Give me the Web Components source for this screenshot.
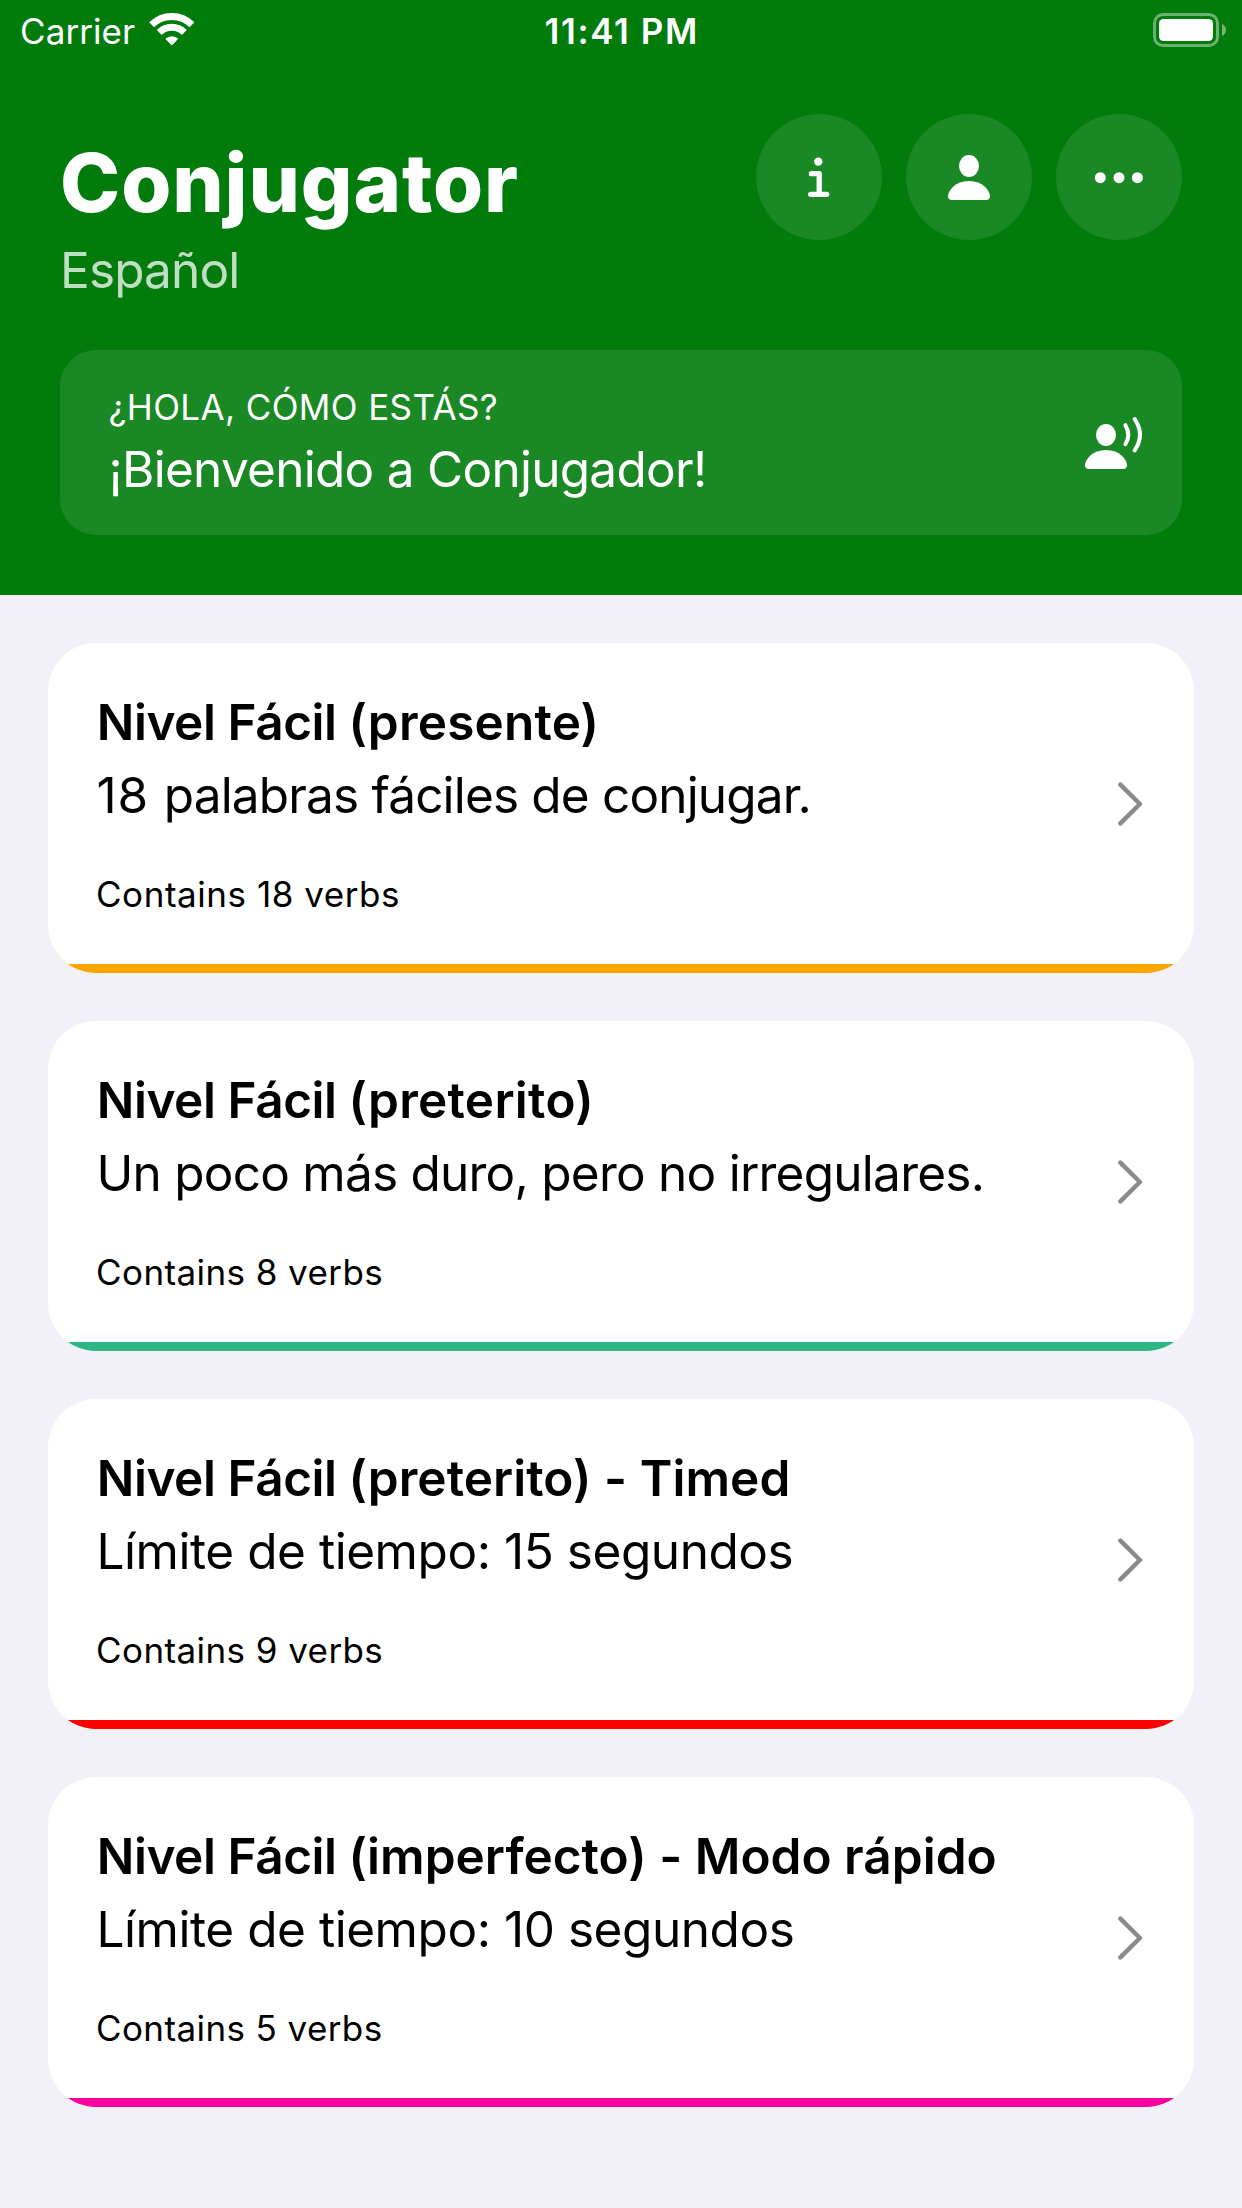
<!DOCTYPE html>
<html lang="es">
<head>
<meta charset="utf-8">
<title>Conjugator</title>
<style>
  html, body { margin: 0; height: 100%; background: #f2f1f7; }
  body { font-family: Inter, "Liberation Sans", sans-serif; }
</style>
</head>
<body>
<conjugator-app></conjugator-app>

<template id="t-status">
  <style>
    :host { display: grid; grid-template-columns: 1fr auto 1fr; height: 60px; box-sizing: border-box;
      padding: 10px 16px 0 20px; color: #fff; font-size: 35px; line-height: 42px; }
    .left { display: flex; gap: 13.5px; }
    .wifi { margin-top: 3px; }
    .clock { font-weight: 600; letter-spacing: 1.62px; padding-right: 2.5px; }
    .battery { justify-self: end; margin-top: 3px; }
    svg { display: block; }
  </style>
  <div class="left"><span style="letter-spacing:.08px">Carrier</span>
    <svg class="wifi" width="46" height="33" viewBox="0 0 46 33" fill="none" stroke="#fff">
      <path stroke-width="7" d="M2.65 11.85A28.5 28.5 0 0 1 42.95 11.85"/>
      <path stroke-width="7" d="M10.28 19.48A17.7 17.7 0 0 1 35.32 19.48"/>
      <path fill="#fff" stroke="none" d="M22.8 32.6L16.3 25.7A9.5 9.5 0 0 1 29.3 25.7Z"/>
    </svg>
  </div>
  <span class="clock">11:41 PM</span>
  <svg class="battery" width="73" height="34" viewBox="0 0 73 34">
    <rect x="1.5" y="1.5" width="63" height="31" rx="8.5" fill="none" stroke="#fff" stroke-opacity=".42" stroke-width="3"/>
    <rect x="6" y="6" width="54" height="22" rx="4.5" fill="#fff"/>
    <path d="M69 11C71.600 12 73 14.400 73 17S71.600 22 69 23Z" fill="#fff" fill-opacity=".45"/>
  </svg>
</template>

<template id="t-button">
  <style>
    :host { display: block; width: 126px; height: 126px; border-radius: 50%; background: rgba(255,255,255,.1); }
    svg { display: block; }
  </style>
  <svg width="126" height="126" viewBox="0 0 126 126" fill="#fff"></svg>
</template>

<template id="t-greeting">
  <style>
    :host { display: flex; justify-content: space-between; align-items: center; height: 185px; box-sizing: border-box;
      padding: 0 39px 0 48.500px; border-radius: 36px; background: rgba(255,255,255,.1); color: #fff; }
    .text { display: flex; flex-direction: column; gap: 11px; }
    .over { font-size: 35px; line-height: 42px; letter-spacing: .38px; }
    .main { font-size: 49.5px; line-height: 60px; letter-spacing: -.72px; }
    svg { display: block; margin-top: 1px; }
  </style>
  <div class="text">
    <div class="over"><slot name="over"></slot></div>
    <div class="main"><slot></slot></div>
  </div>
  <svg width="58" height="52" viewBox="0 0 58 52" fill="#fff">
    <ellipse cx="21" cy="18" rx="10" ry="11"/>
    <path d="M4 52C1.300 52 0 50.600 0 48.300C0 42.500 7.500 33 21 33S42 42.500 42 48.300C42 50.600 40.700 52 38 52Z"/>
    <g fill="none" stroke="#fff" stroke-width="4" stroke-linecap="round">
      <path d="M40.400 8.200Q46.200 17.700 40.400 27.200"/>
      <path d="M49.700 2.100Q60.300 17.900 49.700 33.300"/>
    </g>
  </svg>
</template>

<template id="t-header">
  <style>
    :host { display: flex; flex-direction: column; height: 595px; box-sizing: border-box; background: #007b0c; color: #fff; }
    .top { display: flex; justify-content: space-between; align-items: flex-start; padding: 54px 60px 0; height: 290px; box-sizing: border-box; }
    .titles { display: flex; flex-direction: column; gap: 8px; padding-top: 20px; }
    h1 { margin: 0; font-size: 81px; line-height: 98px; font-weight: 800; letter-spacing: .9px; }
    .sub { font-size: 49.5px; line-height: 60px; letter-spacing: -.85px; color: rgba(255,255,255,.75); }
    .actions { display: flex; gap: 24px; }
    greeting-panel { margin: 0 60px; }
  </style>
  <status-bar></status-bar>
  <div class="top">
    <div class="titles"><h1>Conjugator</h1><div class="sub">Español</div></div>
    <div class="actions">
      <round-button icon="info"></round-button>
      <round-button icon="person"></round-button>
      <round-button icon="more"></round-button>
    </div>
  </div>
  <greeting-panel><span slot="over">¿HOLA, CÓMO ESTÁS?</span>¡Bienvenido a Conjugador!</greeting-panel>
</template>

<template id="t-card">
  <style>
    :host { display: flex; justify-content: space-between; align-items: center; height: 330px; box-sizing: border-box;
      padding: 0 51px 0 48px; border-radius: 48px; color: #000;
      background: linear-gradient(var(--accent), var(--accent)) bottom / 100% 9px no-repeat, #fff; }
    .text { display: flex; flex-direction: column; padding-bottom: 9px; }
    .title { font-size: 49.5px; line-height: 60px; font-weight: 600; letter-spacing: var(--ls-title); padding-left: .8px; }
    .desc { font-size: 49.5px; line-height: 60px; margin-top: 13px; letter-spacing: var(--ls-desc); padding-left: .4px; }
    .count { font-size: 35px; line-height: 42px; margin-top: 48px; letter-spacing: var(--ls-count); }
    svg { display: block; margin-bottom: 8px; }
  </style>
  <div class="text">
    <div class="title"><slot name="title"></slot></div>
    <div class="desc"><slot></slot></div>
    <div class="count"><slot name="count"></slot></div>
  </div>
  <svg width="25" height="44" viewBox="0 0 25 44" fill="none" stroke="#8a8a8e" stroke-width="4.500" stroke-linecap="round" stroke-linejoin="round">
    <path d="M2.400 2.600L21.900 22L2.400 41.400"/>
  </svg>
</template>

<template id="t-app">
  <style>
    :host { display: block; min-height: 2208px; background: #f2f1f7; }
    main { display: flex; flex-direction: column; gap: 48px; padding: 48px; }
    .tight { letter-spacing: -.45px; }
    .wide { letter-spacing: .9px; }
  </style>
  <app-header></app-header>
  <main>
    <level-card style="--accent:#ffa500;--ls-title:.2px;--ls-desc:-.83px;--ls-count:.55px"><span slot="title"><span class="tight">Nivel Fácil </span>(presente)</span><span class="wide">18 </span>palabras fáciles de conjugar.<span slot="count">Contains 18 verbs</span></level-card>
    <level-card style="--accent:#2bb684;--ls-title:.3px;--ls-desc:-.75px;--ls-count:.42px"><span slot="title"><span class="tight">Nivel Fácil </span>(preterito)</span>Un poco más duro, pero no irregulares.<span slot="count">Contains 8 verbs</span></level-card>
    <level-card style="--accent:#ff0000;--ls-title:.07px;--ls-desc:-.44px;--ls-count:.42px"><span slot="title"><span class="tight">Nivel Fácil </span>(preterito) - Timed</span>Límite de tiempo: 15 segundos<span slot="count">Contains 9 verbs</span></level-card>
    <level-card style="--accent:#ff00a0;--ls-title:.02px;--ls-desc:-.44px;--ls-count:.4px"><span slot="title"><span class="tight">Nivel Fácil </span>(imperfecto) - Modo rápido</span>Límite de tiempo: 10 segundos<span slot="count">Contains 5 verbs</span></level-card>
  </main>
</template>

<script>
  class TemplateElement extends HTMLElement {
    constructor() {
      super();
      this.attachShadow({ mode: 'open' })
        .append(document.getElementById(this.constructor.template).content.cloneNode(true));
    }
  }
  const ICONS = {
    info: '<circle cx="62.300" cy="47.600" r="4.200"/><path fill="none" stroke="#fff" stroke-width="5.300" stroke-linecap="round" stroke-linejoin="round" d="M55.400 59.700H63.200V80.300M54.700 80.300H70.700"/>',
    person: '<ellipse cx="63" cy="52" rx="10" ry="11"/><path d="M46 86C43.300 86 42 84.600 42 82.300C42 76.500 49.500 67 63 67S84 76.500 84 82.300C84 84.600 82.700 86 80 86Z"/>',
    more: '<circle cx="44.300" cy="63.700" r="5.500"/><circle cx="63" cy="63.700" r="5.500"/><circle cx="81.400" cy="63.700" r="5.500"/>'
  };
  class StatusBar extends TemplateElement { static template = 't-status'; }
  class RoundButton extends TemplateElement {
    static template = 't-button';
    connectedCallback() {
      this.shadowRoot.querySelector('svg').innerHTML = ICONS[this.getAttribute('icon')] || '';
    }
  }
  class GreetingPanel extends TemplateElement { static template = 't-greeting'; }
  class AppHeader extends TemplateElement { static template = 't-header'; }
  class LevelCard extends TemplateElement { static template = 't-card'; }
  class ConjugatorApp extends TemplateElement { static template = 't-app'; }
  customElements.define('status-bar', StatusBar);
  customElements.define('round-button', RoundButton);
  customElements.define('greeting-panel', GreetingPanel);
  customElements.define('app-header', AppHeader);
  customElements.define('level-card', LevelCard);
  customElements.define('conjugator-app', ConjugatorApp);
</script>
</body>
</html>
